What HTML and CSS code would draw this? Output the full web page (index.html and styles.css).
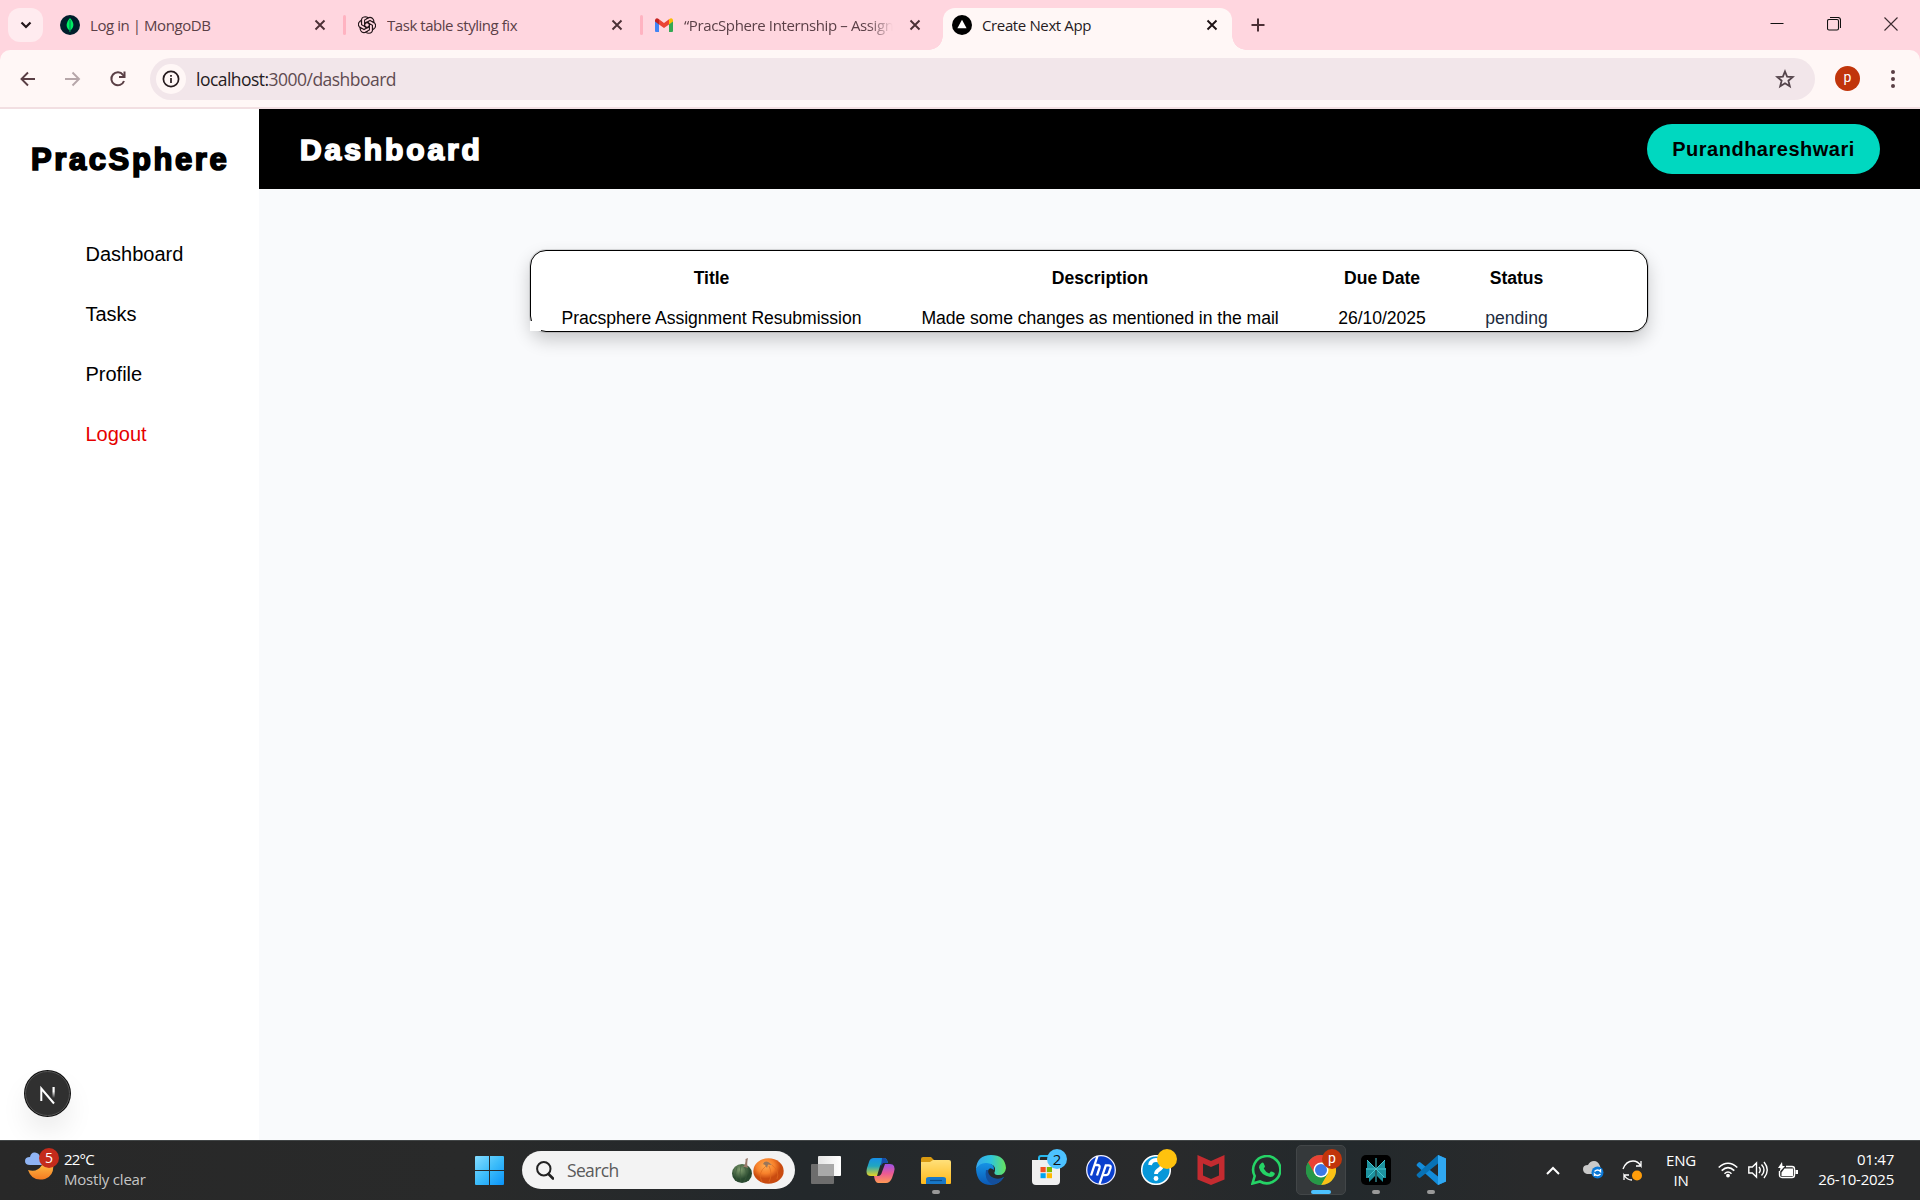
FILE: index.html
```html
<!DOCTYPE html>
<html lang="en">
<head>
<meta charset="utf-8">
<title>Create Next App</title>
<link rel="stylesheet" href="styles.css">
</head>
<body>
<div class="tabstrip">
  <button class="tab-search"><svg width="12" height="8" viewBox="0 0 12 8"><path d="M1.500 1.500 6 6l4.500-4.500" fill="none" stroke="#231519" stroke-width="2.200"/></svg></button>
  <div class="tab tab-one">
    <svg class="fav" width="20" height="20" viewBox="0 0 20 20"><circle cx="10" cy="10" r="10" fill="#001e2b"/><path d="M10 3c4.500 4.500 4.500 9.500.4 12.300L10.200 17h-.5l-.2-1.700C5.500 12.500 5.800 7.500 10 3z" fill="#00ed64"/><path d="M10 5v11" stroke="#00684a" stroke-width=".8"/></svg>
    <span class="tab-title t1">Log in | MongoDB</span>
    <svg class="x" width="12" height="12" viewBox="0 0 12 12"><path d="m1.500 1.500 9 9m0-9-9 9"/></svg>
  </div>
  <i class="sep"></i>
  <div class="tab tab-two">
    <svg class="fav" width="18" height="18" viewBox="0 0 24 24"><g fill="none" stroke="#231519" stroke-width="1.500"><path id="k" d="M4.300 8.500V7Q4.500 1.200 9.500 1Q12 1 13.800 2.600L8.800 5.500V12.500M8.800 10.200 12 8.300 15.200 10.200"/><use href="#k" transform="rotate(60 12 12)"/><use href="#k" transform="rotate(120 12 12)"/><use href="#k" transform="rotate(180 12 12)"/><use href="#k" transform="rotate(240 12 12)"/><use href="#k" transform="rotate(300 12 12)"/></g></svg>
    <span class="tab-title t2">Task table styling fix</span>
    <svg class="x" width="12" height="12" viewBox="0 0 12 12"><path d="m1.500 1.500 9 9m0-9-9 9"/></svg>
  </div>
  <i class="sep"></i>
  <div class="tab tab-three">
    <svg class="fav" width="18" height="14" viewBox="0 0 18 14"><path d="M0 2v11q0 1 1 1h3V5z" fill="#4285f4"/><path d="M18 2v11q0 1-1 1h-3V5z" fill="#34a853"/><path d="M14 1.200v5.300l4-3V2q-.8-3-4-.8z" fill="#fbbc04"/><path d="M4 1.200v5.300L9 10l5-3.500V1.200L9 5z" fill="#ea4335"/><path d="M0 2v1.500l4 3V1.200Q1-.8 0 2z" fill="#c5221f"/></svg>
    <span class="tab-title t3">“PracSphere Internship – Assign</span>
    <svg class="x" width="12" height="12" viewBox="0 0 12 12"><path d="m1.500 1.500 9 9m0-9-9 9"/></svg>
  </div>
  <div class="tab active">
    <svg class="fav" width="20" height="20" viewBox="0 0 20 20"><circle cx="10" cy="10" r="10" fill="#000"/><path d="m10 4.800 4.600 8.400H5.400z" fill="#fff"/></svg>
    <span class="tab-title t4">Create Next App</span>
    <svg class="x" width="12" height="12" viewBox="0 0 12 12"><path d="m1.500 1.500 9 9m0-9-9 9"/></svg>
  </div>
  <svg class="plus" width="14" height="14" viewBox="0 0 14 14"><path d="M7 .5v13M.5 7h13" stroke="#4b3036" stroke-width="2"/></svg>
  <div class="wincontrols">
    <svg width="14" height="14" viewBox="0 0 14 14"><path d="M.5 6.500h13" stroke="#111"/></svg>
    <svg width="14" height="14" viewBox="0 0 14 14"><path d="M3 .5h8q2.500 0 2.500 2.500v8M2 2.500h8q1.500 0 1.500 1.500v7.500q0 1.500-1.500 1.500H2Q.5 13 .5 11.500V4Q.5 2.500 2 2.500z" fill="none" stroke="#111" stroke-width="1.100"/></svg>
    <svg width="14" height="14" viewBox="0 0 14 14"><path d="m.5.5 13 13m0-13-13 13" stroke="#3b2b2f" stroke-width="1.100"/></svg>
  </div>
</div>

<div class="toolbar-back"><div class="toolbar">
  <div class="nav-icons">
    <svg width="18" height="18" viewBox="0 0 18 18"><path d="M16 9H3m6-6.500L2.500 9 9 15.500" fill="none" stroke="#5a3f45" stroke-width="1.900"/></svg>
    <svg width="18" height="18" viewBox="0 0 18 18"><path d="M1 9h14M8.500 2.500 15 9l-6.500 6.500" fill="none" stroke="#b6a6a9" stroke-width="1.900"/></svg>
    <svg width="18" height="18" viewBox="0 0 18 18"><path d="M15 11A6.500 6.500 0 1 1 14 4.800L15.500 6.500" fill="none" stroke="#5a3f45" stroke-width="2"/><path d="M16.500 1.500v6.500h-6.500V6h4.500V1.500z" fill="#5a3f45"/></svg>
  </div>
  <div class="omnibox">
    <span class="site"><svg width="18" height="18" viewBox="0 0 18 18"><circle cx="9" cy="9" r="7.600" fill="none" stroke="#261b1e" stroke-width="1.700"/><path d="M9 8v5M9 5v1.800" stroke="#261b1e" stroke-width="1.700"/></svg></span>
    <span class="url">localhost:<span>3000/dashboard</span></span>
    <svg class="star" width="20" height="20" viewBox="0 0 20 20"><path d="m10 2.500 2.100 5.200 5.600.4-4.300 3.600 1.400 5.500-4.800-3-4.800 3 1.400-5.500L2.300 8.100l5.600-.4z" fill="none" stroke="#54444b" stroke-width="1.800"/></svg>
  </div>
  <span class="avatar">p</span>
  <svg class="dots" width="4" height="18" viewBox="0 0 4 18"><g fill="#5a3f45"><circle cx="2" cy="2" r="2"/><circle cx="2" cy="9" r="2"/><circle cx="2" cy="16" r="2"/></g></svg>
</div></div>

<div class="page">
  <aside class="sidebar">
    <div class="brand">PracSphere</div>
    <nav><a>Dashboard</a><a>Tasks</a><a>Profile</a><a class="logout">Logout</a></nav>
    <div class="next-badge"><svg width="47" height="47" viewBox="0 0 47 47"><defs><linearGradient id="na" x1="0" y1="0" x2="0" y2="1"><stop offset="0" stop-color="#fff"/><stop offset=".4" stop-color="#fff"/><stop offset="1" stop-color="#fff" stop-opacity="0"/></linearGradient></defs><circle cx="23.500" cy="23.500" r="23.500" fill="#111"/><circle cx="23.500" cy="23.500" r="22" fill="#303030" stroke="#555"/><path d="M17.300 31V18.500L30 33.500" fill="none" stroke="#fff" stroke-width="2"/><path d="M28.500 17h2.200v11h-2.200z" fill="url(#na)"/></svg></div>
  </aside>
  <main>
    <header><h1>Dashboard</h1><span class="user">Purandhareshwari</span></header>
    <div class="table-card">
      <div class="row head"><b>Title</b><b>Description</b><b>Due Date</b><b>Status</b></div>
      <div class="row body"><span>Pracsphere Assignment Resubmission</span><span>Made some changes as mentioned in the mail</span><span>26/10/2025</span><span class="pending">pending</span></div>
    </div>
  </main>
</div>

<div class="taskbar">
  <div class="weather">
    <div class="wicon">
      <svg width="30" height="32" viewBox="0 0 30 32"><defs><linearGradient id="mo" x1="0" y1="0" x2="0" y2="1"><stop offset="0" stop-color="#ffc24a"/><stop offset="1" stop-color="#f47a20"/></linearGradient></defs><path d="M3 21q9 3 14-5l11-3q2 14-8 17Q7 33 3 21z" fill="url(#mo)"/><path d="M5 16q-5 0-5-4t5-4q1-5 5-4.500 4 .5 5 4l3 8.500z" fill="#8fb4f4"/></svg>
      <span class="badge">5</span>
    </div>
    <div class="wtext"><div class="deg">22°C</div><div class="cond">Mostly clear</div></div>
  </div>
  <div class="center">
    <svg class="start" width="29" height="29" viewBox="0 0 29 29"><defs><linearGradient id="wi" x1="0" y1="0" x2="1" y2="1"><stop offset="0" stop-color="#84dcff"/><stop offset=".5" stop-color="#3cbcfa"/><stop offset="1" stop-color="#0a93f8"/></linearGradient></defs><path d="M0 1q0-1 1-1h13v14H0zM15 0h13q1 0 1 1v13H15zM0 15h14v14H1q-1 0-1-1zM15 15h14v13q0 1-1 1H15z" fill="url(#wi)"/></svg>
    <div class="search">
      <svg width="18" height="19" viewBox="0 0 18 19"><circle cx="7.800" cy="7.800" r="6.700" fill="none" stroke="#222" stroke-width="2"/><path d="m12.500 13 4.500 4.500" stroke="#222" stroke-width="2.600" stroke-linecap="round"/></svg>
      <span>Search</span>
      <svg class="pumpkins" width="52" height="27" viewBox="0 0 52 27"><defs><radialGradient id="po" cx=".4" cy=".3"><stop offset="0" stop-color="#ffad52"/><stop offset=".6" stop-color="#f7812b"/><stop offset="1" stop-color="#c94b10"/></radialGradient><radialGradient id="pg" cx=".4" cy=".3"><stop offset="0" stop-color="#83a071"/><stop offset="1" stop-color="#29492f"/></radialGradient></defs><ellipse cx="10" cy="16.500" rx="10" ry="9.500" fill="url(#pg)"/><path d="M9 8Q7 16 9 25M12 9q5 8 0 16M5 10q-3 7 0 13" fill="none" stroke="#3a5a3b" stroke-width=".6"/><path d="M11 10q3-3 2.500-8l2.500-1q-1.500 6 0 10l-3-1z" fill="#98796a"/><ellipse cx="36.500" cy="14" rx="15.200" ry="12.800" fill="url(#po)"/><path d="M34 9q-9 7-4 16M37 9q4 8 0 16M40 8q8 6 5 14" fill="none" stroke="#e06c20" stroke-width=".7"/><path d="M31 7q2-4 6-1.500L40 8l-4-.5L35 11l-2-3z" fill="#99765b"/></svg>
    </div>
    <div class="app"><svg width="30" height="28" viewBox="0 0 30 28"><defs><linearGradient id="tv"><stop stop-color="#e4e4e4"/><stop offset="1" stop-color="#fff"/></linearGradient></defs><rect x="7" width="23" height="20" rx="1" fill="url(#tv)"/><rect y="8" width="23" height="20" rx="1" fill="#6d6d6d"/><path d="M7 8h16v12H7z" fill="#a9a9a9"/></svg></div>
    <div class="app"><svg width="30" height="28" viewBox="0 0 30 28"><defs><linearGradient id="c1" x1="0" y1="0" x2="0" y2="1"><stop stop-color="#178fe8"/><stop offset=".45" stop-color="#21a6bf"/><stop offset="1" stop-color="#e8d422"/></linearGradient><linearGradient id="c2" x1="0" y1="0" x2="0" y2="1"><stop stop-color="#9c52e6"/><stop offset=".5" stop-color="#ec5a93"/><stop offset="1" stop-color="#ff9a55"/></linearGradient></defs><path d="M8 2h10q3 0 4 5H17q-2 0-3 3l-3 10H5q-6 0-4-8l2-6q1-4 5-4z" fill="url(#c1)"/><path d="M16 2h3q2 1 3 5h-5l-2 3z" fill="#174da9"/><path d="M19 8h5q6 0 4 8l-2 6q-2 5-6 5h-8q-3 0-4-7h4q3 0 4-4z" fill="url(#c2)"/></svg></div>
    <div class="app running"><svg width="30" height="28" viewBox="0 0 30 28"><defs><linearGradient id="fo" x1="0" y1="0" x2="0" y2="1"><stop stop-color="#ffe07a"/><stop offset="1" stop-color="#ffb91a"/></linearGradient></defs><path d="M0 3q0-2 2-2h8l3 3h15v8H0z" fill="#d99a11"/><path d="M0 6h9l3-2h16q2 0 2 2v21q0 1-1 1H1q-1 0-1-1z" fill="url(#fo)"/><path d="M5 28v-5q0-2 3-2h14q3 0 3 2v5z" fill="#1878c8"/><path d="M9 24.500h12" stroke="#0b4a85" stroke-width="1.200"/></svg></div>
    <div class="app"><svg width="30" height="30" viewBox="0 0 30 30"><defs><linearGradient id="e1"><stop stop-color="#35a6ee"/><stop offset=".5" stop-color="#2fc5dc"/><stop offset="1" stop-color="#67e35b"/></linearGradient><linearGradient id="e2" x1="0" y1="0" x2="0" y2="1"><stop stop-color="#1593e5"/><stop offset="1" stop-color="#0b59b6"/></linearGradient></defs><path d="M0 14Q1 0 15 0q14 0 15 13-1 8-9 7-4-1-2-4 1-7-7-7-7 0-12 5z" fill="url(#e1)"/><path d="M0 14q4-7 11-6 8 1 7 7-5-4-6 1-1 8 7 9 5 0 9-3-5 8-13 8Q1 30 0 14z" fill="url(#e2)"/><path d="M10 15q-2 9 5 14 8 1 13-7-5 3-10 1-6-2-6-8z" fill="#144f9c"/></svg></div>
    <div class="app"><svg width="30" height="30" viewBox="0 0 30 30"><path d="M8 9V3q0-2 2-2h10q2 0 2 2v6" fill="none" stroke="#27b7ec" stroke-width="2"/><path d="M1 5h28v21q0 4-4 4H5q-4 0-4-4z" fill="#f0f0f0"/><path d="M9.500 12h5.200v5.200H9.500z" fill="#f25022"/><path d="M15.800 12H21v5.200h-5.200z" fill="#7fba00"/><path d="M9.500 18.200h5.200v5H9.500z" fill="#00a4ef"/><path d="M15.800 18.200H21v5h-5.200z" fill="#ffb900"/></svg><span class="badge count">2</span></div>
    <div class="app"><svg width="30" height="30" viewBox="0 0 30 30"><circle cx="15" cy="15" r="14.300" fill="#0a3fce" stroke="#eef" stroke-width="1.300"/><path d="M11.500 1 5 20.500M8.800 10h2.500q3 0 2.200 2.800L11 20.500M13.500 29l6.300-18.700h2.700q2.800 0 2 2.700l-1.700 5q-.7 2.200-3 2.200h-2.700" fill="none" stroke="#fff" stroke-width="2.300"/></svg></div>
    <div class="app"><svg width="30" height="30" viewBox="0 0 30 30"><circle cx="15" cy="15" r="14.300" fill="#0797d9" stroke="#fff" stroke-width="1.500"/><path d="M9 10q1-5 6-5 6 0 6 5 0 3-3.500 5-2.500 1.500-2.500 4" fill="none" stroke="#fff" stroke-width="3.800"/><circle cx="15" cy="23.500" r="2.400" fill="#fff"/></svg><span class="badge yellow"></span></div>
    <div class="app"><svg width="28" height="30" viewBox="0 0 28 30"><path d="m.5 0 13.500 6L27.500 0v24.500L14 30 .5 24.500z" fill="#c42b30"/><path d="M6 8.500 14 12l8-3.500v12L14 24l-8-3.500z" fill="#282a2b"/></svg></div>
    <div class="app"><svg width="30" height="30" viewBox="0 0 30 30"><path d="M1.500 28.500 3.700 21A13.600 13.600 0 1 1 9 26.500z" fill="none" stroke="#25d366" stroke-width="2.600"/><path d="M10.500 8q1-.8 2 0l1.500 3.200q0 1-1.300 2.300 2 3.700 5.500 5l1.600-2q.8-.4 3.500 1.300.8.500.2 2-1.500 2.500-4.300 2.200Q10 20.500 8 12.500 7.800 10 10.500 8z" fill="#25d366"/></svg></div>
    <div class="app current"><svg width="30" height="30" viewBox="0 0 30 30"><circle cx="15" cy="15" r="15" fill="#34a853"/><path d="M2 7.500A15 15 0 0 1 28 7.500H15L8.500 18.750z" fill="#e94235"/><path d="M28 7.500A15 15 0 0 1 15 30l6.500-11.250L15 7.500z" fill="#fbc116"/><path d="M8.500 18.750 2 7.500A15 15 0 0 0 15 30l6.500-11.250z" fill="#279847"/><circle cx="15" cy="15" r="7.500" fill="#fff"/><circle cx="15" cy="15" r="6" fill="#3c79e6"/></svg><span class="badge profile">p</span></div>
    <div class="app running"><svg width="30" height="30" viewBox="0 0 30 30"><rect width="30" height="30" rx="5" fill="#000"/><path d="M14 13 6 5v8H5v10h3v4l6-6zM16 13l8-8v8h1v10h-3v4l-6-6z" fill="#1d929f"/><path d="M15 3v24M15 14 6 5m9 9 9-9m-9 9-8 8m8-8 8 8M5 14h20" stroke="#46c5d0" stroke-width="1"/></svg></div>
    <div class="app running"><svg width="30" height="30" viewBox="0 0 30 30"><path d="M22 0 30 3.500v23L22 30 1 11q-1-1 0-2l1.500-1.500q1-.8 2 0L22 21.500z" fill="#138cda"/><path d="M22 0v8.500L4.500 22.500q-1 .8-2 0L1 21q-1-1 0-2z" fill="#0872b5"/><path d="M22 0 30 3.500v23L22 30z" fill="#30a8f2"/></svg></div>
  </div>
  <div class="tray">
    <svg width="14" height="9" viewBox="0 0 14 9"><path d="m1 8 6-6 6 6" fill="none" stroke="#fff" stroke-width="2"/></svg>
    <svg class="cloud" width="21" height="18" viewBox="0 0 21 18"><path d="M4 13q-4-1-4-5t5-4q2-4 6-4t6 5l2 8z" fill="#c9c9c9"/><circle cx="14.500" cy="11.500" r="6" fill="#0b79d8"/><path d="M11.500 10.500q3-3 6 0V8m0 5q-3 3-6 0v2" fill="none" stroke="#fff" stroke-width="1.400"/></svg>
    <svg class="sync" width="21" height="21" viewBox="0 0 21 21"><path d="M1 9Q4 1 11 1q5 0 8 5V1m0 5h-5M10 20q-5 0-8-5v5m0-5h5" fill="none" stroke="#fff" stroke-width="1.300"/><circle cx="15" cy="15.500" r="5" fill="#ff9d0a"/></svg>
    <div class="lang">ENG<br>IN</div>
    <svg class="wifi" width="20" height="16" viewBox="0 0 20 16"><g fill="none" stroke="#fff" stroke-width="1.600"><path d="M.7 5.500q9.300-8.500 18.600 0M3.700 8.700q6.300-6 12.600 0M6.500 11.700q3.500-3.400 7 0"/></g><circle cx="10" cy="13.600" r="1.900" fill="#fff"/></svg>
    <svg class="sound" width="20" height="18" viewBox="0 0 20 18"><g fill="none" stroke="#fff" stroke-width="1.400"><path d="M.8 6h3.500L8.500 2v14l-4.200-4H.8zM11 6q2.500 3 0 6M13.500 3.500q5 5.500 0 11M16 1q6.500 8 0 16"/></g></svg>
    <svg class="battery" width="20" height="17" viewBox="0 0 20 17"><path d="M8 4.500h6q2.500 0 2.500 2.500v6q0 2.500-2.500 2.500H4Q1.500 15.500 1.500 13V9" fill="none" stroke="#fff" stroke-width="1.400"/><path d="M6.500 6.500H15V14H3.500v-3.500zM17.500 8H20v4h-2.500zM4 0 0 6h2.500L1.500 10 7 4H4.500z" fill="#fff"/></svg>
    <div class="clock">01:47<br>26-10-2025</div>
  </div>
</div>
</body>
</html>
```
FILE: styles.css
```css
* { box-sizing: border-box; }
body { margin: 0; width: 1920px; height: 1200px; overflow: hidden; display: flex; flex-direction: column; font-family: "Liberation Sans", Arial, sans-serif; color: #000; }
svg { display: block; flex: none; }

/* Browser tabs */
.tabstrip { height: 50px; background: #ffd6df; display: flex; align-items: center; padding-left: 8px; font: 15px/20px "Open Sans", sans-serif; color: #5b4047; }
.tab-search { width: 35px; height: 34px; border: 0; border-radius: 12px; background: #ffebef; display: grid; place-items: center; padding: 0; }
.tab { display: flex; align-items: center; }
.tab .fav { margin-right: 10px; }
.tab-title { flex: 1; white-space: nowrap; overflow: hidden; }
.t1 { letter-spacing: -.43px; }
.t2 { letter-spacing: -.45px; }
.t3 { letter-spacing: -.38px; margin-right: 16px; mask-image: linear-gradient(90deg, #000 88%, transparent); }
.t4 { letter-spacing: -.37px; }
.x path { stroke: #4b3036; stroke-width: 1.900; }
.tab-one { width: 266px; margin-left: 17px; }
.tab-two { width: 265px; margin-left: 12px; }
.tab-two .fav { margin-right: 11px; }
.tab-three { width: 266px; margin-left: 12px; }
.tab-three .fav { margin-right: 11px; }
.sep { width: 3px; height: 20px; background: #ffb3c1; border-radius: 2px; margin-left: 17px; }
.active { position: relative; width: 289px; height: 42px; margin: 8px 0 0 22px; padding: 0 14px 8px 9px; background: #fff7f6; border-radius: 12px 12px 0 0; color: #261b1e; }
.active::before, .active::after { content: ""; position: absolute; bottom: 0; width: 14px; height: 14px; }
.active::before { left: -14px; background: radial-gradient(circle at 0 0, transparent 13.5px, #fff7f6 14px); }
.active::after { right: -14px; background: radial-gradient(circle at 100% 0, transparent 13.5px, #fff7f6 14px); }
.active .x path { stroke: #1e1215; }
.plus { margin-left: 19px; }
.wincontrols { margin: 0 22px 2px auto; display: flex; gap: 43px; }

/* Address bar */
.toolbar-back { background: #ffd6df; }
.toolbar { height: 59px; background: #fff7f6; border-bottom: 2px solid #f2dfe2; border-radius: 10px 10px 0 0; display: flex; align-items: center; padding-left: 19px; }
.nav-icons { display: flex; gap: 27px; width: 131px; }
.omnibox { width: 1665px; height: 42px; border-radius: 21px; background: #f2e6ea; display: flex; align-items: center; padding: 0 20px 0 6px; }
.site { width: 30px; height: 30px; border-radius: 50%; background: #fff7f6; display: grid; place-items: center; }
.url { margin-left: 10px; flex: 1; font: 17.5px/24px "Open Sans", sans-serif; letter-spacing: -.53px; color: #261b1e; }
.url span { color: #5f4b51; }
.avatar { width: 25px; height: 25px; border-radius: 50%; background: #c1350b; color: #fff; margin-left: 20px; font: 14px/23px Roboto, sans-serif; text-align: center; }
.dots { margin-left: 31px; }

/* Page */
.page { height: 1031px; display: flex; background: #f9fafc; }
.sidebar { width: 259px; background: #fff; padding: 31px 24px 23px; display: flex; flex-direction: column; }
.brand { font-weight: 700; font-size: 31px; line-height: 40px; letter-spacing: 2.6px; margin-left: 7px; white-space: nowrap; -webkit-text-stroke: 1.7px #000; }
nav { display: flex; flex-direction: column; gap: 36px; margin: 62px 0 auto 61.5px; font-size: 20px; line-height: 24px; }
.logout { color: #e60000; }
.next-badge { width: 47px; height: 47px; border-radius: 50%; box-shadow: 0 16px 32px -8px rgba(0,0,0,.16); }
main { flex: 1; display: flex; flex-direction: column; }
header { height: 80px; background: #000; display: flex; align-items: center; justify-content: space-between; padding: 0 40px 0 41px; }
h1 { margin: 2px 0 0; color: #fff; font-size: 30px; line-height: 40px; letter-spacing: 2.9px; -webkit-text-stroke: 1.7px #fff; }
.user { width: 233px; height: 50px; border-radius: 25px; background: #00d8c0; display: grid; place-items: center; font-weight: 700; font-size: 20px; letter-spacing: .5px; }
.table-card { position: relative; width: 1118px; height: 82px; margin: 61px 0 0 271px; background: #fff; border: 1px solid #000; border-radius: 16px; box-shadow: 0 0 0 1px rgba(0,0,0,.12), 0 8px 18px rgba(0,0,0,.2); font-size: 17.6px; letter-spacing: -.04px; line-height: 20px; }
.table-card::after { content: ""; position: absolute; left: -1px; bottom: 0; width: 11px; height: 10px; background: #fff; }
.row { display: grid; grid-template-columns: 361px 416px 148px 121px; text-align: center; position: relative; z-index: 1; white-space: nowrap; }
.head { padding-top: 17px; }
.body { padding-top: 20px; }
.pending { color: #1c2b40; }

/* Taskbar */
.taskbar { height: 60px; background: linear-gradient(90deg, #282828, #292a2a 24%, #23282b 42%, #292a2b 60%, #23292c 70%, #292a2b 80%); border-top: 1px solid #424647; display: flex; color: #fff; font: 15px/20px "Open Sans", sans-serif; }
.weather { width: 475px; padding: 8px 0 0 25px; display: flex; letter-spacing: -.2px; }
.wicon { position: relative; width: 39px; }
.deg { letter-spacing: -.8px; }
.cond { color: #c6c6c6; }
.badge { position: absolute; width: 20px; height: 20px; border-radius: 50%; font-size: 14px; line-height: 20px; text-align: center; }
.wicon .badge { left: 14px; top: -1px; background: #c42b1c; }
.center { display: flex; align-items: center; height: 58px; }
.search { width: 273px; height: 38px; margin: 0 6px 0 18px; padding: 0 11px 0 14px; border-radius: 19px; background: #f3f3f3; display: flex; align-items: center; color: #5a5a5a; font-size: 17.5px; letter-spacing: -.65px; }
.search span { margin-left: 13px; flex: 1; }
.app { position: relative; width: 50px; height: 50px; margin-right: 5px; border-radius: 5px; display: grid; place-items: center; }
.app .badge { right: 4px; top: 4px; }
.app .count { background: #4cc2ff; color: #111; font-size: 15px; }
.yellow { background: #ffc20e; }
.profile { background: #c1350b; font-family: Roboto, sans-serif; line-height: 18px; }
.current { background: #35393b; border: 1px solid #424648; }
.current .badge { right: 3px; top: 3px; }
.running::after, .current::after { content: ""; position: absolute; bottom: 1px; left: 21px; width: 8px; height: 4px; border-radius: 2px; background: #999; }
.current::after { left: 14px; bottom: 0; width: 20px; background: #4cc2ff; }
.tray { margin-left: auto; padding-right: 25px; display: flex; align-items: center; height: 58px; }
.cloud { margin-left: 23px; }
.sync { margin-left: 18px; }
.lang { width: 40px; margin: 0 17px 1px 18px; text-align: center; letter-spacing: -.2px; }
.sound { margin-left: 10px; }
.battery { margin-left: 10px; }
.clock { width: 97px; padding-right: 1px; margin-bottom: 2px; text-align: right; letter-spacing: -.25px; white-space: nowrap; }
```
